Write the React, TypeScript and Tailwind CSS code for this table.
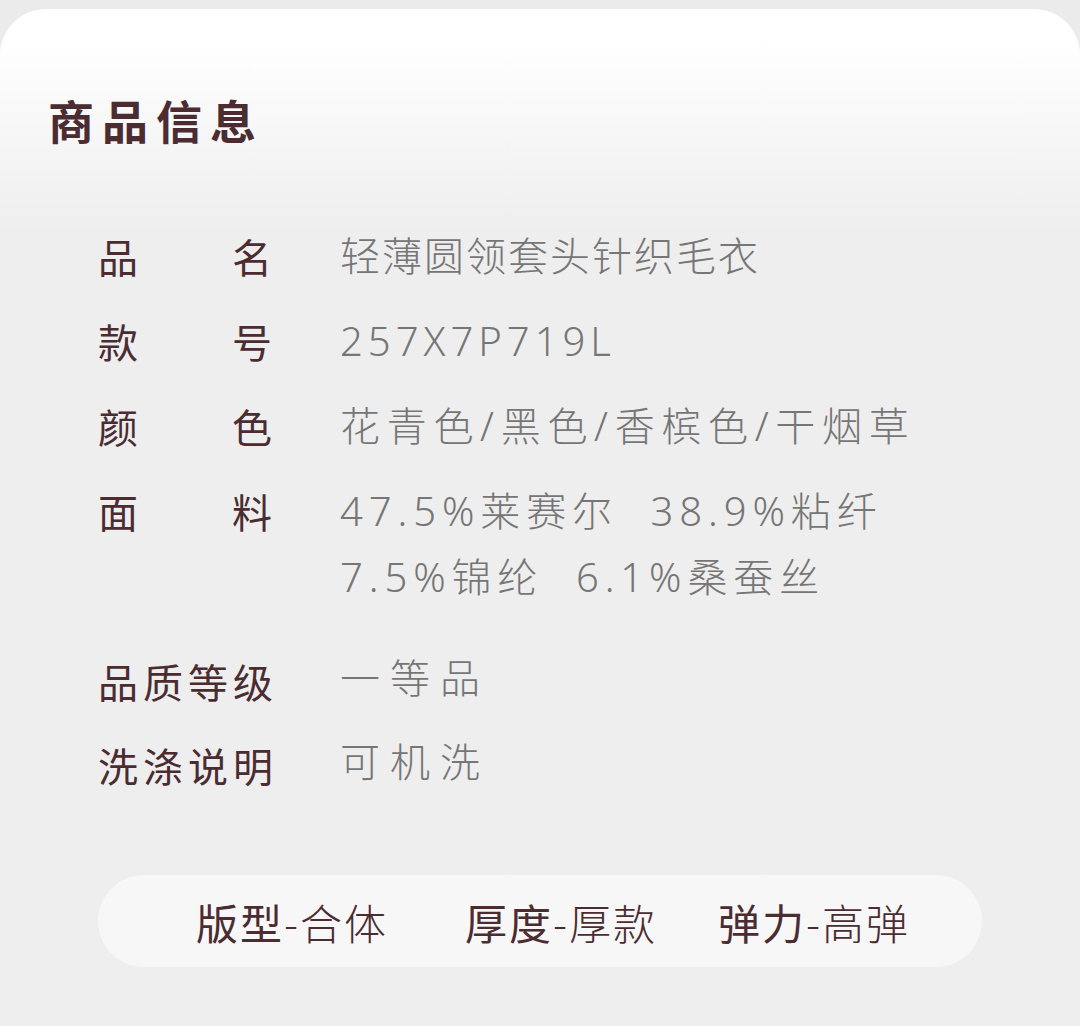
const ROWS: { label: string; value: string[]; track: string }[] = [
  { label: "品名", value: ["轻薄圆领套头针织毛衣"], track: "tracking-[2px]" },
  { label: "款号", value: ["257X7P719L"], track: "tracking-[5px]" },
  { label: "颜色", value: ["花青色/黑色/香槟色/干烟草"], track: "tracking-[6.7px]" },
  {
    label: "面料",
    value: ["47.5%莱赛尔  38.9%粘纤", "7.5%锦纶  6.1%桑蚕丝"],
    track: "tracking-[5.9px]",
  },
];

const ROWS2 = [
  { label: "品质等级", value: "一等品" },
  { label: "洗涤说明", value: "可机洗" },
];

const TAGS = [
  { k: "版型", v: "合体", w: "w-[269px]" },
  { k: "厚度", v: "厚款", w: "w-[253px]" },
  { k: "弹力", v: "高弹", w: "" },
];

const valueFont = { fontFamily: '"Noto Sans", "Noto Sans CJK SC", sans-serif' };

function Label({ text }: { text: string }) {
  if (text.length === 2) {
    return (
      <div className="flex w-[174px] shrink-0 justify-between">
        <span>{text[0]}</span>
        <span>{text[1]}</span>
      </div>
    );
  }
  return <div className="w-[174px] shrink-0 whitespace-nowrap tracking-[5px]">{text}</div>;
}

export default function App() {
  return (
    <div
      className="min-h-[1026px] w-[1080px] bg-[#ebebeb] pt-[9px]"
      style={{ fontFamily: '"Noto Sans CJK SC", "Noto Sans", sans-serif' }}
    >
      <div className="h-[1017px] rounded-t-[46px] bg-gradient-to-b from-white from-[3%] to-[#eeeeee] to-[22%]">
        <h2 className="pl-[48px] pt-[78px] text-[46px] font-bold leading-[64px] tracking-[8px] text-[#4a2c31]">
          商品信息
        </h2>

        <div className="mt-[72px] pl-[98px] text-[40px] leading-[66px]">
          {ROWS.map((r) => (
            <div key={r.label} className="mb-[19px] flex">
              <div className="text-[#4a2c31]">
                <Label text={r.label} />
              </div>
              <div
                className={`ml-[68px] font-light text-[#767676] ${r.track}`}
                style={valueFont}
              >
                {r.value.map((v) => (
                  <div key={v} className="whitespace-pre">
                    {v}
                  </div>
                ))}
              </div>
            </div>
          ))}
          <div className="pt-[19px]">
            {ROWS2.map((r) => (
              <div key={r.label} className="mb-[18px] flex">
                <div className="text-[#4a2c31]">
                  <Label text={r.label} />
                </div>
                <div className="ml-[68px] -translate-y-[5px] font-light tracking-[10px] text-[#767676]">
                  {r.value}
                </div>
              </div>
            ))}
          </div>
        </div>

        <div className="mx-[98px] mt-[77px] flex h-[92px] items-center rounded-full bg-[#f7f7f7] pl-[98px] text-[42px] tracking-[2px] text-[#4a2c31]">
          {TAGS.map((t) => (
            <div key={t.k} className={`shrink-0 whitespace-nowrap ${t.w}`}>
              <span className="font-normal">{t.k}</span>
              <span className="font-light">-{t.v}</span>
            </div>
          ))}
        </div>
      </div>
    </div>
  );
}
